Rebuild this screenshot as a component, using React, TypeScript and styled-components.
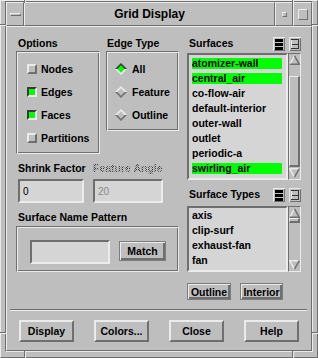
import React from "react";
import styled, { createGlobalStyle, css } from "styled-components";

const C = {
  bg: "#bebebe",
  light: "#ebebeb",
  dark: "#6f6f6f",
  well: "#d5d5d5",
  green: "#00ff00",
  ink: "#000000",
};

const FONT = `"Liberation Sans", Arial, Helvetica, sans-serif`;

const GlobalStyle = createGlobalStyle`
  * { box-sizing: border-box; }
  html, body { margin: 0; padding: 0; background: ${C.bg}; }
  body { font-family: ${FONT}; color: ${C.ink}; }
`;

const raised = css`
  border-style: solid;
  border-color: ${C.light} ${C.dark} ${C.dark} ${C.light};
`;
const sunken = css`
  border-style: solid;
  border-color: ${C.dark} ${C.light} ${C.light} ${C.dark};
`;
const boldText = css`
  font-family: ${FONT};
  font-weight: 700;
  font-size: 10.5px;
  color: ${C.ink};
  white-space: nowrap;
`;
const stipple = css`
  color: transparent;
  background: repeating-conic-gradient(#3c3c3c 0% 25%, transparent 0% 50%) 0 0 / 2px 2px;
  -webkit-background-clip: text;
  background-clip: text;
`;

/* ---------- window frame ---------- */

const Window = styled.div`
  position: relative;
  width: 318px;
  height: 358px;
  display: flex;
  flex-direction: column;
  background: ${C.bg};
  border-width: 1px;
  ${raised};
  padding: 0 4px 5px 4px;
`;

const Frame = styled.div`
  flex: 1;
  display: flex;
  flex-direction: column;
  border-width: 1px;
  ${sunken};
`;

const Notch = styled.span<{ $v?: boolean }>`
  position: absolute;
  ${(p) =>
    p.$v
      ? css`
          width: 2px;
          border-left: 1px solid ${C.dark};
          border-right: 1px solid ${C.light};
        `
      : css`
          height: 2px;
          border-top: 1px solid ${C.dark};
          border-bottom: 1px solid ${C.light};
        `}
`;

const TitleBar = styled.div`
  display: flex;
  height: 24px;
  flex: none;
`;

const TitleCell = styled.div<{ $w?: number }>`
  ${(p) => (p.$w ? `width:${p.$w}px; flex:none;` : "flex:1;")}
  border-width: 1px;
  ${raised};
  display: flex;
  align-items: center;
  justify-content: center;
`;

const TitleText = styled.span`
  font-family: ${FONT};
  font-weight: 700;
  font-size: 12px;
  color: ${C.ink};
`;

const MenuGlyph = styled.span`
  width: 11px;
  height: 3px;
  border-width: 1px;
  ${raised};
  margin-left: 1px;
`;

const MinGlyph = styled.span`
  width: 5px;
  height: 5px;
  border-width: 1px;
  ${raised};
`;

const MaxGlyph = styled.span`
  width: 10px;
  height: 11px;
  border-width: 1px;
  ${raised};
`;

const Client = styled.div`
  flex: 1;
  display: flex;
  flex-direction: column;
  border-width: 1px;
  ${raised};
`;

/* ---------- layout ---------- */

const TopArea = styled.div`
  display: flex;
  gap: 8px;
  padding: 9px 10px 0 9px;
`;

const LeftPane = styled.div`
  width: 163px;
  display: flex;
  flex-direction: column;
`;

const RightPane = styled.div`
  width: 114px;
  display: flex;
  flex-direction: column;
`;

const GroupsRow = styled.div`
  display: flex;
  gap: 6px;
  align-items: flex-start;
`;

const Column = styled.div<{ $w: number }>`
  width: ${(p) => p.$w}px;
  display: flex;
  flex-direction: column;
`;

const Label = styled.div<{ $indent?: number; $disabled?: boolean; $mt?: number }>`
  ${boldText};
  height: 15px;
  line-height: 15px;
  padding-left: ${(p) => p.$indent ?? 0}px;
  margin-top: ${(p) => p.$mt ?? 0}px;
  ${(p) => p.$disabled && stipple}
`;

const GroupBox = styled.div<{ $h: number; $pt: number; $pl: number; $mt?: number }>`
  height: ${(p) => p.$h}px;
  margin-top: ${(p) => p.$mt ?? 0}px;
  padding: ${(p) => p.$pt}px 0 0 ${(p) => p.$pl}px;
  border: 1px solid;
  border-color: ${C.dark} ${C.light} ${C.light} ${C.dark};
  box-shadow: inset 1px 1px 0 ${C.light}, inset -1px -1px 0 ${C.dark};
`;

const PatternBox = styled(GroupBox)`
  display: flex;
  align-items: flex-start;
  gap: 9px;
`;

const OptionRow = styled.div<{ $h: number; $gap: number }>`
  display: flex;
  align-items: center;
  height: ${(p) => p.$h}px;
  gap: ${(p) => p.$gap}px;
`;

const OptionText = styled.span`
  ${boldText};
  line-height: 12px;
`;

const Indicator = styled.span<{ $on: boolean }>`
  width: 10px;
  height: 10px;
  flex: none;
  border: 2px solid;
  border-color: ${(p) =>
    p.$on
      ? `#3a3a3a ${C.light} ${C.light} #3a3a3a`
      : `${C.light} ${C.dark} ${C.dark} ${C.light}`};
  background: ${(p) => (p.$on ? C.green : C.bg)};
`;

const DiamondSvg = styled.svg`
  flex: none;
  display: block;
`;

const FieldsRow = styled.div`
  display: flex;
  gap: 9px;
  margin-top: 7px;
  padding-left: 2px;
`;

const TextField = styled.div<{ $w?: number; $disabled?: boolean; $mt?: number }>`
  ${(p) => (p.$w ? `width:${p.$w}px; flex:none;` : "")}
  height: 24px;
  margin-top: ${(p) => p.$mt ?? 0}px;
  border-width: 2px;
  ${sunken};
  background: ${C.well};
  display: flex;
  align-items: center;
  padding-left: 3px;
  font-family: ${FONT};
  font-size: 10px;
  color: ${(p) => (p.$disabled ? "#8a8a8a" : C.ink)};
`;

const PushButton = styled.button<{ $w: number; $h: number; $ring?: boolean }>`
  width: ${(p) => p.$w}px;
  height: ${(p) => p.$h}px;
  flex: none;
  margin: 0;
  padding: 0;
  ${boldText};
  background: ${C.bg};
  display: flex;
  align-items: center;
  justify-content: center;
  ${(p) =>
    p.$ring
      ? css`
          border: 1px solid #7c7c7c;
          box-shadow: inset 1px 1px 0 ${C.light}, inset -2px -2px 0 ${C.dark};
        `
      : css`
          border-width: 2px;
          ${raised};
        `}
`;

const MatchButton = styled(PushButton)`
  margin-top: 1px;
`;

/* ---------- lists ---------- */

const ListHeader = styled.div<{ $mt?: number }>`
  display: flex;
  align-items: center;
  height: 15px;
  margin-top: ${(p) => p.$mt ?? 0}px;
`;

const HeaderLabel = styled.span`
  ${boldText};
  flex: 1;
  padding-left: 2px;
  line-height: 15px;
`;

const IconGroup = styled.div`
  display: flex;
  gap: 4px;
`;

const IconSvg = styled.svg`
  display: block;
`;

const ListRow = styled.div<{ $h: number; $mt: number }>`
  display: flex;
  height: ${(p) => p.$h}px;
  margin-top: ${(p) => p.$mt}px;
`;

const ListBox = styled.div<{ $pt: number }>`
  width: 101px;
  height: 100%;
  border-width: 2px;
  ${sunken};
  background: ${C.well};
  padding: ${(p) => p.$pt}px 4px 0 3px;
  overflow: hidden;
`;

const ListItem = styled.div`
  height: 15px;
  padding: 2px 0;
`;

const ItemText = styled.div<{ $sel: boolean }>`
  ${boldText};
  height: 11px;
  line-height: 11px;
  background: ${(p) => (p.$sel ? C.green : "transparent")};
`;

const ScrollBar = styled.div`
  width: 13px;
  height: 100%;
  border-width: 1px;
  ${sunken};
  background: ${C.bg};
  display: flex;
  flex-direction: column;
  align-items: center;
  padding: 1px 0;
`;

const Thumb = styled.div<{ $mt: number; $h: number }>`
  align-self: stretch;
  margin-top: ${(p) => p.$mt}px;
  height: ${(p) => p.$h}px;
  border-style: solid;
  border-width: 1px 2px 2px 1px;
  border-color: ${C.light} ${C.dark} ${C.dark} ${C.light};
`;

const Spacer = styled.div`
  flex: 1;
`;

const PaneButtons = styled.div`
  display: flex;
  gap: 9px;
  margin-top: 11px;
`;

const Separator = styled.div`
  height: 2px;
  margin: 9px 4px 0 3px;
  border-top: 1px solid ${C.dark};
  border-bottom: 1px solid ${C.light};
`;

const BottomRow = styled.div`
  display: flex;
  justify-content: space-between;
  padding: 0 12px;
  margin-top: 9px;
`;

/* ---------- drawings ---------- */

function Diamond({ on }: { on: boolean }) {
  const top = on ? "#3a3a3a" : C.light;
  const bot = on ? C.light : C.dark;
  return (
    <DiamondSvg width="12" height="12" viewBox="0 0 12 12">
      <polygon points="0,6 6,0 12,6" fill={top} />
      <polygon points="0,6 6,12 12,6" fill={bot} />
      <polygon points="6,2.3 9.7,6 6,9.7 2.3,6" fill={on ? C.green : C.bg} />
    </DiamondSvg>
  );
}

function ArrowUp() {
  return (
    <IconSvg width="11" height="10" viewBox="0 0 11 10">
      <polygon points="5.5,0.8 10.3,9.3 0.7,9.3" fill={C.bg} />
      <polyline points="0.7,9.3 5.5,0.8" stroke={C.light} strokeWidth="1.4" fill="none" />
      <polyline points="5.5,0.8 10.3,9.3 0.7,9.3" stroke={C.dark} strokeWidth="1.4" fill="none" />
    </IconSvg>
  );
}

function ArrowDown() {
  return (
    <IconSvg width="11" height="10" viewBox="0 0 11 10">
      <polygon points="0.7,0.7 10.3,0.7 5.5,9.2" fill={C.bg} />
      <polyline points="10.3,0.7 0.7,0.7 5.5,9.2" stroke={C.light} strokeWidth="1.4" fill="none" />
      <polyline points="5.5,9.2 10.3,0.7" stroke={C.dark} strokeWidth="1.4" fill="none" />
    </IconSvg>
  );
}

function SelectAllIcon() {
  return (
    <IconSvg width="12" height="14" viewBox="0 0 12 14" shapeRendering="crispEdges">
      <rect x="0" y="0" width="12" height="14" fill={C.light} />
      <rect x="1" y="1" width="11" height="13" fill={C.dark} />
      <rect x="1" y="1" width="10" height="12" fill={C.bg} />
      <rect x="2" y="2" width="8" height="3" fill="#000" />
      <rect x="2" y="6" width="8" height="3" fill="#000" />
      <rect x="2" y="10" width="8" height="3" fill="#000" />
    </IconSvg>
  );
}

function DeselectIcon() {
  return (
    <IconSvg width="12" height="14" viewBox="0 0 12 14" shapeRendering="crispEdges">
      <rect x="0" y="0" width="12" height="14" fill={C.light} />
      <rect x="1" y="1" width="11" height="13" fill={C.dark} />
      <rect x="1" y="1" width="10" height="12" fill={C.bg} />
      <rect x="2" y="2" width="8" height="1" fill="#333" />
      <rect x="2" y="7" width="8" height="1" fill="#333" />
      <rect x="2" y="11" width="8" height="1" fill="#333" />
      <rect x="9" y="2" width="1" height="10" fill="#333" />
      <rect x="2" y="3" width="1" height="8" fill={C.light} />
    </IconSvg>
  );
}

/* ---------- data ---------- */

const options = [
  { label: "Nodes", on: false },
  { label: "Edges", on: true },
  { label: "Faces", on: true },
  { label: "Partitions", on: false },
];

const edgeTypes = [
  { label: "All", on: true },
  { label: "Feature", on: false },
  { label: "Outline", on: false },
];

const surfaces = [
  { name: "atomizer-wall", sel: true },
  { name: "central_air", sel: true },
  { name: "co-flow-air", sel: false },
  { name: "default-interior", sel: false },
  { name: "outer-wall", sel: false },
  { name: "outlet", sel: false },
  { name: "periodic-a", sel: false },
  { name: "swirling_air", sel: true },
];

const surfaceTypes = ["axis", "clip-surf", "exhaust-fan", "fan"];

/* ---------- app ---------- */

export default function App() {
  return (
    <>
      <GlobalStyle />
      <Window>
        <Frame>
          <TitleBar>
            <TitleCell $w={18}>
              <MenuGlyph />
            </TitleCell>
            <TitleCell>
              <TitleText>Grid Display</TitleText>
            </TitleCell>
            <TitleCell $w={18}>
              <MinGlyph />
            </TitleCell>
            <TitleCell $w={19}>
              <MaxGlyph />
            </TitleCell>
          </TitleBar>

          <Client>
            <TopArea>
              <LeftPane>
                <GroupsRow>
                  <Column $w={84}>
                    <Label $indent={2}>Options</Label>
                    <GroupBox $h={103} $pt={6} $pl={10}>
                      {options.map((o) => (
                        <OptionRow key={o.label} $h={22.8} $gap={4}>
                          <Indicator $on={o.on} />
                          <OptionText>{o.label}</OptionText>
                        </OptionRow>
                      ))}
                    </GroupBox>
                  </Column>
                  <Column $w={73}>
                    <Label $indent={1}>Edge Type</Label>
                    <GroupBox $h={80} $pt={5} $pl={8}>
                      {edgeTypes.map((e) => (
                        <OptionRow key={e.label} $h={23} $gap={5}>
                          <Diamond on={e.on} />
                          <OptionText>{e.label}</OptionText>
                        </OptionRow>
                      ))}
                    </GroupBox>
                  </Column>
                </GroupsRow>

                <FieldsRow>
                  <Column $w={66}>
                    <Label>Shrink Factor</Label>
                    <TextField $mt={3}>0</TextField>
                  </Column>
                  <Column $w={70}>
                    <Label $disabled>Feature Angle</Label>
                    <TextField $mt={3} $disabled>
                      20
                    </TextField>
                  </Column>
                </FieldsRow>

                <Label $indent={2} $mt={7}>
                  Surface Name Pattern
                </Label>
                <PatternBox $h={46} $pt={13} $pl={13} $mt={1}>
                  <TextField $w={80} />
                  <MatchButton $w={47} $h={20} $ring>
                    Match
                  </MatchButton>
                </PatternBox>
              </LeftPane>

              <RightPane>
                <ListHeader>
                  <HeaderLabel>Surfaces</HeaderLabel>
                  <IconGroup>
                    <SelectAllIcon />
                    <DeselectIcon />
                  </IconGroup>
                </ListHeader>
                <ListRow $h={127} $mt={2}>
                  <ListBox $pt={1}>
                    {surfaces.map((s) => (
                      <ListItem key={s.name}>
                        <ItemText $sel={s.sel}>{s.name}</ItemText>
                      </ListItem>
                    ))}
                  </ListBox>
                  <ScrollBar>
                    <ArrowUp />
                    <Thumb $mt={11} $h={91} />
                    <Spacer />
                    <ArrowDown />
                  </ScrollBar>
                </ListRow>

                <ListHeader $mt={7}>
                  <HeaderLabel>Surface Types</HeaderLabel>
                  <IconGroup>
                    <SelectAllIcon />
                    <DeselectIcon />
                  </IconGroup>
                </ListHeader>
                <ListRow $h={66} $mt={4}>
                  <ListBox $pt={0}>
                    {surfaceTypes.map((t) => (
                      <ListItem key={t}>
                        <ItemText $sel={false}>{t}</ItemText>
                      </ListItem>
                    ))}
                  </ListBox>
                  <ScrollBar>
                    <ArrowUp />
                    <Thumb $mt={0} $h={5} />
                    <Spacer />
                    <ArrowDown />
                  </ScrollBar>
                </ListRow>

                <PaneButtons>
                  <PushButton $w={44} $h={17} $ring>
                    Outline
                  </PushButton>
                  <PushButton $w={43} $h={17} $ring>
                    Interior
                  </PushButton>
                </PaneButtons>
              </RightPane>
            </TopArea>

            <Separator />

            <BottomRow>
              <PushButton $w={55} $h={22}>Display</PushButton>
              <PushButton $w={55} $h={22}>Colors...</PushButton>
              <PushButton $w={55} $h={22}>Close</PushButton>
              <PushButton $w={55} $h={22}>Help</PushButton>
            </BottomRow>
          </Client>
        </Frame>

        <Notch $v style={{ left: 23, top: -1, height: 3 }} />
        <Notch $v style={{ left: 291, top: -1, height: 3 }} />
        <Notch $v style={{ left: 23, top: 350, height: 7 }} />
        <Notch $v style={{ left: 291, top: 350, height: 7 }} />
        <Notch style={{ left: -1, top: 23, width: 6 }} />
        <Notch style={{ left: -1, top: 331, width: 6 }} />
        <Notch style={{ left: 311, top: 23, width: 6 }} />
        <Notch style={{ left: 311, top: 331, width: 6 }} />
      </Window>
    </>
  );
}
